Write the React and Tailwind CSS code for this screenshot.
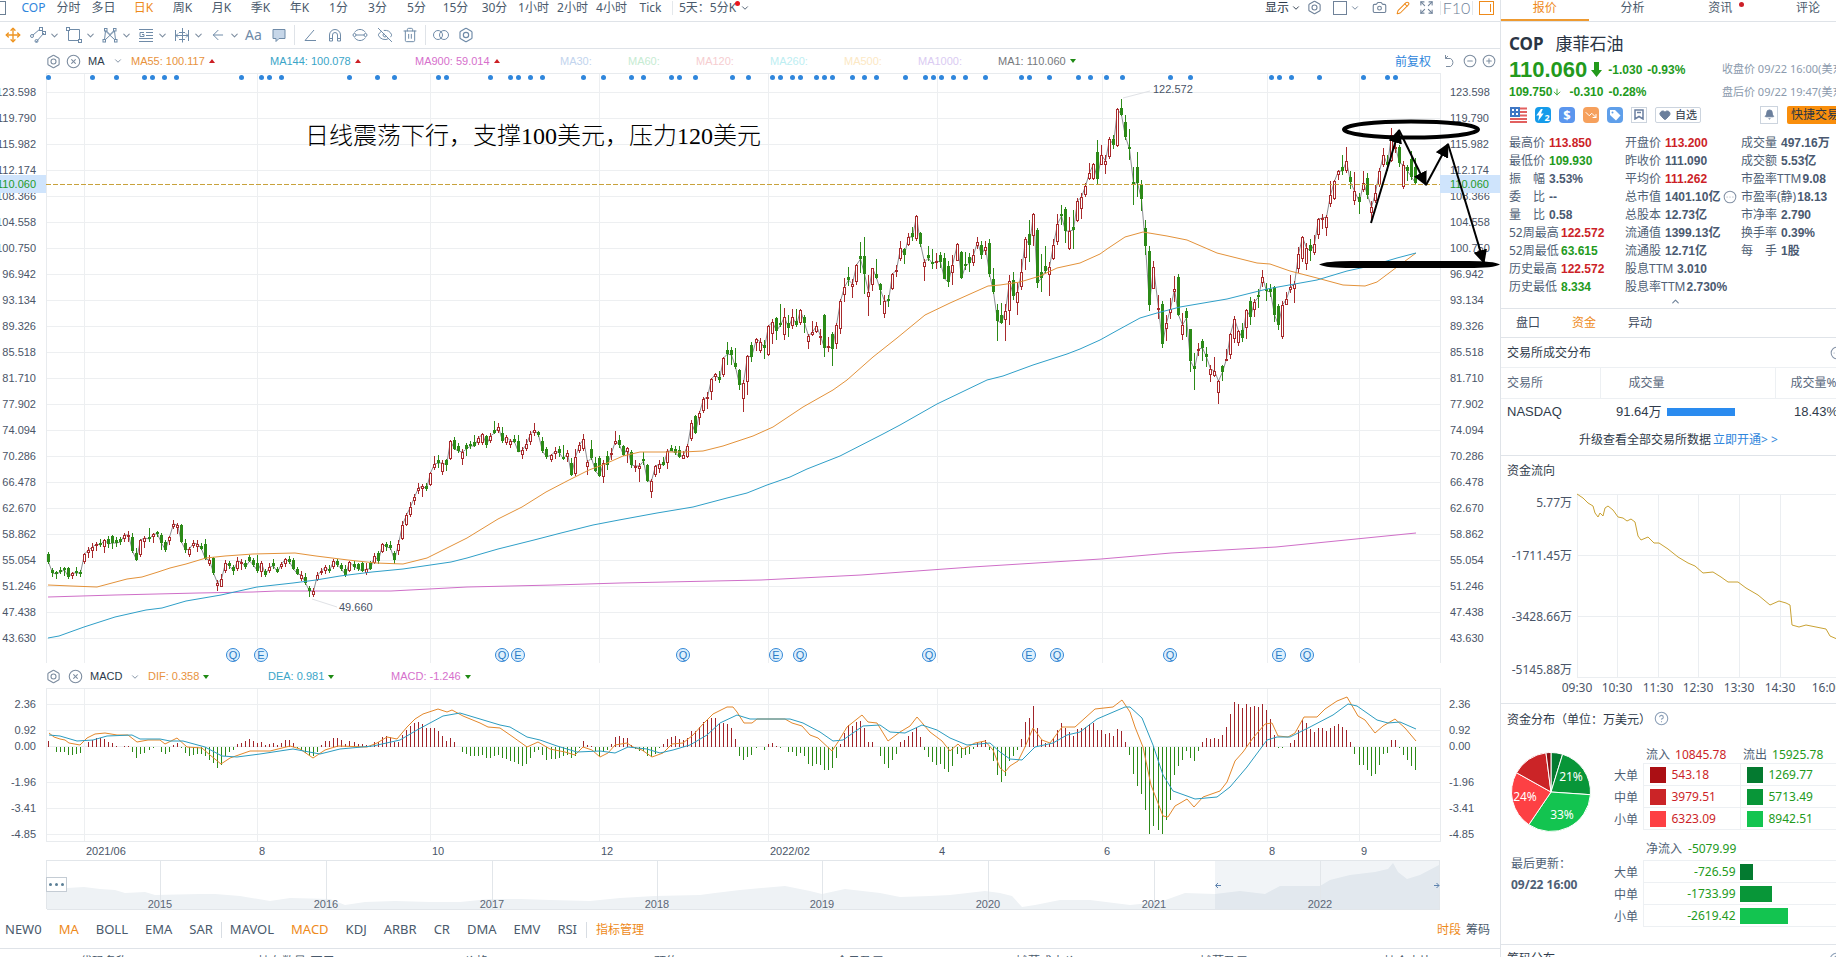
import {
  Bolt, Camera, ChevronDown, ChevronUp, CircleEllipsis, CircleHelp, CircleMinus, CirclePlus, CircleX,
  EyeOff, Heart, Expand, Move, Pencil, Trash2, Bell, TrendingDown, ArrowLeft, ArrowDown,
} from 'lucide-react'
import clsx from 'clsx'

/* ---------- chart data ---------- */

// One token per trading day: direction (r = up, g = down), then high, body top, body bottom, low.
// Levels are thirds of a unit below the leg's `top`.
const legs = [
  {
    top: 380,
    bars: `g516,522,546,551 g563,570,579,590 g574,576,583,598 g560,570,576,582 g561,564,570,588 g561,565,592,596
      r577,580,588,596 g562,574,578,588 g570,575,580,590 r520,522,546,552 r502,510,518,535 r488,500,514,535
      r486,492,498,514 g478,488,494,500 r476,480,500,518 g468,476,492,504 g464,468,490,506 g470,480,490,500
      g470,476,486,494 r460,466,476,486 r454,466,470,486 g460,470,514,520 g504,520,540,542 r476,480,526,530
      r468,474,486,504 g444,472,478,486 r458,462,472,490 g454,456,462,470 g460,466,490,510 g480,485,510,516
      r468,472,482,494 r420,432,440,446 r428,434,444,462 g432,436,486,490 g478,490,510,520 r502,506,526,530
      r480,488,498,504 r480,492,502,516 g488,498,506,510 g476,492,536,540 r524,540,552,558 g530,534,580,584
      r600,608,618,632 r582,598,620,622 r540,550,572,578 g542,548,558,566 g554,562,574,586 r530,542,568,572
      r538,546,552,570 g540,548,560,566 g526,532,542,546 g534,540,556,560 g524,550,574,578 r544,550,576,590
      g566,574,584,590 r550,560,572,580 g536,548,558,568 g562,566,576,580 r546,552,562,568 r534,538,552,562
      g528,538,546,552 g534,540,566,570 g560,566,582,586 r572,586,596,602 g580,592,610,616 g618,625,634,652
      r624,632,644,650 r576,584,600,602 r564,572,580,586 r556,562,572,582 g556,566,574,578 r536,542,560,568
      g536,542,554,560 g550,554,568,572 g554,566,584,592 r542,546,574,576 g542,552,562,570 g548,552,566,574
      g546,550,572,576 r550,568,578,586 g544,550,566,570 r520,528,548,552 g514,520,542,552 r488,492,516,520
      g486,492,502,512 g484,494,504,510 g514,520,540,552 r480,492,512,526 r424,436,476,480 r400,406,436,438
      r366,382,406,412 r342,350,362,374 r308,324,334,342 r312,318,326,350 g310,318,328,332 r276,280,314,318
      r228,252,264,270 g226,240,248,264 r240,250,276,284 g236,240,256,272 r180,184,238,240 g172,180,206,210
      g190,198,214,220 r208,216,236,256 g190,196,206,228 g182,192,198,206 g166,186,198,200 r168,174,190,196
      r158,162,190,194 g164,168,194,204 r160,168,184,190 g122,150,158,162 r130,140,154,158 g142,160,184,190
      r166,172,188,194 r176,182,194,204 g166,176,186,190 g166,182,216,216 r200,210,224,236 r178,192,206,214
      r154,162,186,196 r130,150,158,168 g154,156,166,170 g172,184,212,220 g202,208,232,238 r222,226,240,246
      r200,212,222,238 g198,206,220,232 g196,230,236,240 r210,218,230,246 g234,250,284,288 r208,230,282,288
      r186,194,214,220 r162,176,206,212 r240,246,262,286 g180,206,234,240 g230,250,272,276 g228,234,288,292`,
  },
  {
    top: 200,
    bars: `r780,790,830,850 g754,768,795,810 r744,758,764,780 r694,724,732,736 g705,720,734,744 g735,737,765,768
      r740,744,756,788 g750,757,794,803 r780,798,805,817 r790,798,806,845 g755,777,784,795 g792,796,842,845
      r838,842,876,893 r795,799,826,830 r780,793,806,818 g770,786,795,797 r748,752,790,806 g736,743,752,754
      g739,748,758,766 g738,750,770,774 r754,766,776,778 r733,737,770,773 r660,669,718,724 g646,649,698,701
      r633,640,655,675 r592,598,634,640 r576,590,598,626 r534,538,576,600 r520,523,530,544 g514,530,540,548
      r472,475,526,531 g427,451,462,494 g442,451,466,496 g443,489,500,506 g508,510,556,569 r540,550,596,635
      r465,469,547,584 g427,436,470,486 r415,418,430,454 r415,426,452,458 g421,435,444,476 r374,379,464,467
      r358,367,401,431 g352,355,394,421 g313,369,376,380 r325,352,404,419 g346,370,385,410 r328,352,379,388
      g327,363,374,382 r328,331,370,376 g346,351,370,400 r402,409,427,448 r363,397,404,408 r365,379,397,399
      r388,409,415,434 g343,345,445,472 r412,437,443,456 g397,401,448,497 r370,376,433,446 r297,304,388,403
      r233,262,284,305 g202,232,241,257 r238,252,260,293 r193,196,247,256 g125,169,177,218 g112,169,223,283
      r226,277,292,347 r203,205,256,272 g178,223,233,238 g250,253,271,316 r284,302,343,355 g286,298,304,320
      r220,223,268,271 r196,210,217,232 r122,145,178,184 g143,147,166,193 r100,112,136,139 g82,98,110,124
      r46,49,118,124 g97,100,131,142 r178,187,202,244 g139,166,173,182 g146,187,193,206 r160,184,190,208
      g157,166,185,205 g160,175,236,238 g184,198,245,260 r166,196,220,256 r128,133,182,184 g154,157,235,238
      g157,193,199,211 g160,172,190,217 r146,166,190,199 r112,125,139,148 g122,136,164,176 r124,142,152,166
      g118,130,221,230 g205,238,275,281 g313,330,362,422 g310,346,370,373 r313,334,361,422 r226,244,334,374
      g217,240,287,299 r250,277,310,344 r178,217,262,271 r112,118,175,211 g61,102,136,185 r38,41,109,139
      g85,90,250,265 g163,217,235,275 g137,199,214,220 r187,202,226,287 r118,136,178,181 r41,73,125,134
      g16,42,49,76 g22,28,94,130 r50,92,148,149 g31,82,89,146`,
  },
  {
    top: 0,
    bars: `r595,604,663,667 r580,592,626,658 r550,559,584,592 r490,520,536,541 r489,492,538,541 g421,457,536,556
      r436,466,494,496 r464,484,496,521 r412,418,472,478 g404,418,434,448 r323,326,439,442 g297,324,344,349
      g345,367,410,421 g388,442,446,480 g502,546,550,616 g456,502,550,592 g541,556,596,632 g661,685,737,766
      g738,754,914,932`,
  },
  {
    top: 240,
    bars: `r63,80,146,148 r166,205,211,238 g184,193,311,323 r226,250,268,302 r175,208,218,237 r108,148,155,186
      g102,112,224,228 r220,256,284,300 g205,214,233,290 g266,268,364,395 g340,378,387,449 r310,328,334,347
      g298,304,325,362 g322,342,350,380 r376,388,406,425 r352,394,409,411 r420,424,460,493 g374,379,397,422
      r328,356,362,364 r280,283,346,358 r228,237,298,310 r270,274,308,318 g250,271,293,305 r208,211,265,298
      g170,184,232,254 r178,187,211,230 g146,166,172,203 r91,110,128,142 g130,146,152,182 g133,148,157,172
      g138,142,226,245 g193,198,256,269 r184,196,290,296 r156,178,194,196 r106,142,150,158 r124,133,146,190`,
  },
  {
    top: 0,
    bars: `r742,763,808,820 r709,712,776,786 r730,745,793,811 g718,736,754,782 r706,733,758,766 r655,658,706,716
      r643,655,661,686 r645,652,685,709 r542,584,612,622 r541,544,596,600 r511,514,526,541 g466,502,512,526
      r442,484,514,518 g512,532,545,568 r517,574,602,616 g580,592,607,643 r514,550,571,577 g520,535,584,598
      r604,622,640,668 r556,580,602,610 r505,514,556,562 r445,466,496,502 g466,485,496,514 r385,406,482,487
      r415,442,448,458 g436,441,490,502 r484,496,560,568 g496,500,512,544 g454,478,532,540 g475,500,549,556`,
  },
]

const dayX = (i) => Math.round(48 + i * 4.02) + 0.5

const candles = legs
  .flatMap(({ top, bars }) =>
    bars.trim().split(/\s+/).map((token) => {
      const [high, open, close, low] = token.slice(1).split(',').map((v) => Math.round(top + v / 3))
      return { up: token[0] === 'r', high, bodyTop: open, bodyBottom: close, low }
    }))
  .map((c, i) => ({ ...c, x: dayX(i) }))

const closeLine = candles.map((c) => `${c.x},${c.up ? c.bodyTop : c.bodyBottom}`).join(' ')

// MACD histogram, thirds of a unit, positive = above zero
const histogram = [
  18, 0, -14, -16, -16, -25, -25, -22, -19, 0, 14, 22, 27, 27, 24, 16, 13, 4, 0, 4, 4, -16, -34, -22, -18, -10, -4, 0, -14, -22,
  -16, 6, 12, -4, -18, -26, -24, -20, -20, -28, -38, -48, -62, -54, -28, -14, -8, 10, 12, 18, 24, 18, 13, 16, 7, 10, 13, 7, 12, 22,
  20, 13, -4, -10, -18, -28, -28, -16, 6, 18, 18, 27, 26, 20, 10, 18, 16, 8, 10, 6, 4, 16, 14, 30, 32, 30, 14, 16, 36, 50,
  64, 72, 74, 68, 56, 56, 56, 48, 34, 18, 28, 16, 0, -16, -22, -28, -28, -28, -24, -32, -32, -26, -24, -34, -36, -42, -44, -52, -58, -52,
  -32, -16, -10, -24, -38, -36, -36, -32, -28, -24, -34, -26, -4, 18, 6, 4, -12, -26, -16, -8, 8, 30, 34, 28, 26, 6, -6, -12, -12, -26,
  -30, -20, -4, 8, 24, 30, 32, 24, 22, 28, 48, 48, 60, 76, 80, 86, 86, 72, 72, 70, 56, 24, -26, -40, -30, -24, -4, 0, -8, 8,
  12, 4, -4, 0, -16, -16, -26, -18, -28, -50, -56, -50, -54, -68, -68, -64, -34, 8, 42, 66, 62, 76, 78, 56, 16, 16, 0, -26, -50, -62,
  -38, -20, 14, 22, 34, 44, 56, 30, -10, -30, -46, -54, -52, -66, -74, -56, -22, -34, -24, -20, -6, 16, 14, 20, -10, -42, -84, -104, -88, -42,
  -26, -10, 24, 76, 88, 124, 58, 22, 12, 8, 26, 52, 72, 58, 44, 34, 54, 56, 60, 70, 72, 50, 52, 38, 42, 34, 54, 48, 16, -24,
  -82, -116, -140, -190, -262, -238, -248, -262, -220, -160, -84, -58, -40, -12, -34, -42, -12, 14, 28, 24, 28, 24, 36, 60, 100, 134, 128, 118, 128, 120,
  122, 120, 128, 110, 84, 36, -4, -4, 0, 12, 20, 50, 80, 72, 54, 46, 58, 56, 48, 56, 64, 68, 60, 50, 16, -20, -54, -54, -68, -88,
  -82, -54, -20, -18, 22, 22, -4, -24, -38, -56, -68,
]

const ma55 = '48,585 71,586 97,587 127,579 142,577 158,572 170,568 186,564 206,558 225,556 253,554 295,553 316,556 348,560 376,563 403,564 427,558 467,538 498,519 522,507 546,492 569,480 589,470 605,464 623,456 640,452 683,452 703,451 723,446 753,436 773,427 803,407 833,390 847,380 873,357 897,338 925,315 950,303 988,286 1000,285 1020,282 1040,276 1057,268 1080,263 1100,254 1107,249 1125,237 1143,232 1167,236 1187,240 1217,253 1257,263 1270,264 1290,271 1317,278 1343,285 1365,286 1377,282 1393,270 1416,253'
const ma144 = '48,638 59,636 84,627 115,617 146,610 162,608 186,601 221,595 257,587 293,583 316,580 340,576 372,572 403,569 451,562 467,558 498,549 534,540 561,533 593,525 619,520 657,513 693,507 727,498 747,493 767,485 790,477 807,469 840,456 883,434 900,425 937,404 987,380 1003,376 1033,365 1067,354 1080,349 1100,340 1118,330 1140,318 1157,313 1180,307 1227,299 1267,289 1317,280 1347,271 1370,266 1397,258 1416,253'
const ma900 = '48,597 115,595 198,593 253,592 277,591 391,591 467,587 554,585 620,583 761,580 861,575 972,567 1101,559 1171,553 1276,547 1416,533'

const dif = '49,733 54,737 60,739 65,740 69,743 80,745 87,738 95,734 105,733 117,735 128,735 137,742 148,740 160,740 165,744 177,738 187,747 202,748 210,755 221,764 230,758 250,751 270,751 290,746 300,749 313,758 325,750 338,746 367,747 377,743 387,737 397,739 407,727 415,719 423,714 438,709 447,712 452,710 463,716 480,723 488,727 500,728 513,737 527,747 538,742 550,749 565,752 575,755 583,747 592,750 600,757 608,753 615,745 627,743 633,747 642,750 652,757 663,753 672,744 683,743 693,735 703,724 713,714 727,707 733,707 737,712 744,723 752,723 757,719 785,719 792,723 802,726 810,735 818,738 832,751 838,742 847,727 862,715 868,722 877,723 888,741 900,732 910,726 917,717 930,732 942,741 950,751 958,744 963,749 975,743 985,741 993,750 1000,768 1005,772 1010,766 1018,761 1025,747 1033,728 1042,740 1050,743 1062,727 1075,727 1095,709 1113,707 1122,700 1130,712 1135,727 1143,747 1151,785 1163,816 1168,817 1175,806 1182,802 1187,799 1194,807 1203,797 1220,791 1227,782 1235,761 1243,752 1253,738 1265,724 1272,723 1278,736 1288,737 1295,733 1304,717 1317,717 1325,709 1337,701 1347,697 1358,716 1365,720 1375,733 1383,726 1395,719 1405,728 1416,741'
const dea = '49,735 60,736 77,741 93,740 107,736 132,735 140,739 160,739 170,741 183,741 205,747 222,756 237,757 260,754 293,749 320,754 340,749 373,746 400,740 417,730 443,716 460,713 480,719 500,725 510,727 527,737 540,740 557,746 577,752 600,751 615,753 628,747 647,749 660,753 673,750 690,745 707,735 720,723 737,715 750,719 790,719 803,723 820,732 833,741 843,740 863,726 880,725 890,732 905,733 922,725 937,730 950,738 967,745 990,743 1000,752 1010,759 1022,760 1035,747 1053,743 1067,735 1080,732 1097,719 1125,707 1130,707 1142,718 1153,745 1163,775 1173,791 1187,796 1195,799 1217,797 1230,787 1247,767 1267,740 1277,737 1290,737 1310,727 1333,715 1348,704 1357,706 1377,720 1388,723 1400,722 1416,729'

const history = '46,889 67,888 84,887 100,889 115,890 125,893 145,892 155,895 200,894 215,894 240,896 270,901 290,898 330,899 345,905 365,902 395,901 430,902 460,902 490,899 520,899 550,900 590,901 620,898 655,896 700,895 715,893 740,890 785,886 810,891 822,894 845,889 880,893 900,897 930,896 950,895 985,891 1000,893 1012,896 1022,907 1035,905 1060,900 1090,900 1130,905 1160,902 1185,893 1215,894 1240,891 1265,894 1280,886 1320,886 1330,880 1350,875 1375,872 1388,869 1393,863 1398,872 1407,879 1420,875 1439,865'

const newsMarks = [
  48, 92, 116, 144, 152, 164, 176, 241, 261, 269, 281, 349, 377, 394, 438, 446, 490, 510, 518, 530, 542, 583, 603, 631, 643,
  671, 679, 695, 732, 748, 772, 780, 792, 800, 816, 824, 832, 852, 864, 876, 905, 925, 933, 941, 953, 965, 985, 1021, 1029,
  1049, 1078, 1090, 1106, 1122, 1170, 1190, 1271, 1279, 1291, 1319, 1363, 1387, 1395,
]

const events = [
  [233, 'Q'], [261, 'E'], [502, 'Q'], [518, 'E'], [683, 'Q'], [776, 'E'], [800, 'Q'],
  [929, 'Q'], [1029, 'E'], [1057, 'Q'], [1170, 'Q'], [1279, 'E'], [1307, 'Q'],
]

const months = [
  [84, '2021/06'], [257, '8'], [430, '10'], [599, '12'], [768, '2022/02'], [937, '4'], [1102, '6'], [1267, '8'], [1359, '9'],
]
const years = [[160, 2015], [326, 2016], [492, 2017], [657, 2018], [822, 2019], [988, 2020], [1154, 2021], [1320, 2022]]

const prices = [
  '123.598', '119.790', '115.982', '112.174', '108.366', '104.558', '100.750', '96.942', '93.134', '89.326', '85.518',
  '81.710', '77.902', '74.094', '70.286', '66.478', '62.670', '58.862', '55.054', '51.246', '47.438', '43.630',
]
const macdTicks = [[704, '2.36'], [730, '0.92'], [746, '0.00'], [782, '-1.96'], [808, '-3.41'], [834, '-4.85']]

const chartFont = "font-['Liberation_Sans',sans-serif] text-[11px]"

/* ---------- left: toolbars ---------- */

const periods = ['日K', '周K', '月K', '季K', '年K', '1分', '3分', '5分', '15分', '30分', '1小时', '2小时', '4小时', 'Tick']

function PeriodBar() {
  return (
    <nav className="flex h-[22px] shrink-0 items-center border-b border-[#dfe3e8] pb-[6px] leading-[14px] whitespace-nowrap text-[#4a5a6c]">
      <span className="-ml-2 h-[14px] w-[14px] shrink-0 border border-[#6b7f94]" />
      <div className="ml-[10px] flex">
        <button className="w-[35px] text-[#2f86dc]">COP</button>
        <button className="w-[35px]">分时</button>
        <button className="w-[35px]">多日</button>
      </div>
      <div className="ml-[3px] flex">
        {periods.map((p) => (
          <button key={p} className={clsx('w-[39px]', p === '日K' && 'text-[#ee8a1a]')}>{p}</button>
        ))}
      </div>
      <span className="ml-[2px] h-[14px] w-px bg-[#e4e8ec]" />
      <button className="relative ml-[6px] flex items-center gap-1">
        5天：5分K
        <ChevronDown size={10} strokeWidth={2.25} />
        <span className="absolute top-0 right-[10px] h-[5px] w-[5px] rounded-full bg-[#e8141c]" />
      </button>

      <div className="ml-auto flex items-center text-[#6f8299]">
        <button className="flex items-center gap-[2px] text-[#2c3a4a]">显示<ChevronDown size={10} strokeWidth={2.25} /></button>
        <button aria-label="设置" className="ml-[6px]"><Bolt size={15} strokeWidth={1.75} /></button>
        <button aria-label="布局" className="ml-[11px] flex items-center gap-[3px]">
          <span className="h-[14px] w-[14px] border border-[#6f8299]" />
          <ChevronDown size={10} strokeWidth={2.25} />
        </button>
        <button aria-label="截图" className="ml-[12px]"><Camera size={15} strokeWidth={1.75} /></button>
        <button aria-label="画线" className="ml-[9px] text-[#ee8a1a]"><Pencil size={14} strokeWidth={1.75} /></button>
        <button aria-label="全屏" className="ml-[9px]"><Expand size={15} strokeWidth={1.75} /></button>
        <span className="ml-[6px] h-[14px] w-px bg-[#e4e8ec]" />
        <button className="w-[31px] font-['Lato',sans-serif] text-base leading-[14px] font-light">F10</button>
        <span className="h-[14px] w-px bg-[#e4e8ec]" />
        <button aria-label="侧栏" className="mx-[6px] flex h-[14px] w-[15px] justify-end border border-[#ee8a1a] p-[2px]">
          <span className="h-2 w-px bg-[#ee8a1a]" />
        </button>
      </div>
    </nav>
  )
}

function Glyph({ children }) {
  return (
    <svg viewBox="0 0 16 16" fill="none" stroke="currentColor" className="h-4 w-4 shrink-0">{children}</svg>
  )
}

const drawMenus = [
  {
    name: '线段',
    icon: (
      <Glyph>
        <path d="M3 8 10 2M6 15 14 6" />
        <circle cx="2" cy="9" r="1.5" /><rect x="9.5" y=".5" width="3" height="3" />
        <rect x="12.5" y="4.5" width="3" height="3" /><circle cx="6.5" cy="14" r="1.5" />
      </Glyph>
    ),
  },
  {
    name: '形状',
    icon: (
      <Glyph>
        <path d="M4 2.5H13.5V12M12 13.5H2.5V4" />
        <rect x=".5" y=".5" width="3" height="3" /><rect x="12.5" y="12.5" width="3" height="3" />
      </Glyph>
    ),
  },
  {
    name: '形态',
    icon: (
      <Glyph>
        <path d="M2.5 13 3.5 4 13 13M3 13 12.5 4 13.500 13M4.500 4 8 7.500 11.500 4" />
        <rect x="2.500" y="1.500" width="2.500" height="2.500" /><rect x="11.500" y="1.500" width="2.500" height="2.500" />
        <rect x="1" y="12.500" width="2.500" height="2.500" /><rect x="12.500" y="12.500" width="2.500" height="2.500" />
      </Glyph>
    ),
  },
  {
    name: '斐波那契',
    icon: (
      <Glyph>
        <path d="M1 2.500H15M8 5.500H15M8 8.500H15M1 11.500H15M1 14.500H15M6 5.500H2V9.500H6V7.500H4" />
      </Glyph>
    ),
  },
  {
    name: '测量',
    icon: (
      <Glyph>
        <path d="M1.500 3V14M14.500 3V14M2 8.500H14M5 5.500H11M5 12.500H11M8.500 1V15.500M4 6.500 2 8.500 4 10.500M12 6.500 14 8.500 12 10.500" />
      </Glyph>
    ),
  },
  { name: '箭头', icon: <ArrowLeft size={16} strokeWidth={1.5} /> },
]

function DrawBar() {
  return (
    <div className="flex h-[27px] shrink-0 items-center border-b border-[#dfe3e8] pl-[5px] text-[#6f8ba8]">
      <button aria-label="移动" className="mr-[9px] text-[#ee9420]"><Move size={16} strokeWidth={2} /></button>
      {drawMenus.map(({ name, icon }) => (
        <button key={name} aria-label={name} className="flex w-9 items-center gap-[3px]">
          {icon}
          <ChevronDown size={11} strokeWidth={2.25} className="text-[#7d8da0]" />
        </button>
      ))}
      <div className="flex items-center gap-[9px]">
        <button aria-label="文字" className="w-4 text-sm leading-4"><span className="-ml-px">Aa</span></button>
        <button aria-label="标注">
          <Glyph><path d="M2 2.500H14V11.500H8L5 14.500V11.500H2Z" fill="#c6d6e8" /></Glyph>
        </button>
      </div>
      <span className="mx-[7px] h-5 w-px bg-[#dfe3e8]" />
      <div className="flex items-center gap-[9px]">
        <button aria-label="角度"><Glyph><path d="M12 3 3 13.500H14" /></Glyph></button>
        <button aria-label="磁吸">
          <Glyph><path d="M2.500 14V8A5.500 5.500 0 0 1 13.500 8V14H10.500V8A2.500 2.500 0 0 0 5.500 8V14ZM2.500 11.500H5.500M10.500 11.500H13.500" /></Glyph>
        </button>
        <button aria-label="连续">
          <Glyph>
            <path d="M2.500 5.500A6.500 6.500 0 0 1 13.500 5.500M2.500 10.500A6.500 6.500 0 0 0 13.500 10.500M4 8H12" />
            <circle cx="2.500" cy="8" r="1.500" /><circle cx="13.500" cy="8" r="1.500" />
          </Glyph>
        </button>
        <button aria-label="隐藏"><EyeOff size={16} strokeWidth={1.5} /></button>
        <button aria-label="删除"><Trash2 size={16} strokeWidth={1.5} /></button>
      </div>
      <span className="mx-[7px] h-5 w-px bg-[#dfe3e8]" />
      <div className="flex items-center gap-[9px]">
        <button aria-label="对比"><Glyph><circle cx="5" cy="8" r="4.500" /><circle cx="11" cy="8" r="4.500" /></Glyph></button>
        <button aria-label="画线设置"><Bolt size={16} strokeWidth={1.75} /></button>
      </div>
    </div>
  )
}

function Caret({ up }) {
  return (
    <svg viewBox="0 0 6 4" className="h-1 w-[6px]">
      {up ? <path d="M0 4 3 0 6 4Z" fill="#cc1f24" /> : <path d="M0 0H6L3 4Z" fill="#1f8a14" />}
    </svg>
  )
}

const maLegend = [
  { text: 'MA55: 100.117', up: true, cls: 'w-[139px] text-[#e8923c]' },
  { text: 'MA144: 100.078', up: true, cls: 'w-[145px] text-[#3aa5c8]' },
  { text: 'MA900: 59.014', up: true, cls: 'w-[145px] text-[#d670cc]' },
  { text: 'MA30:', cls: 'w-[68px] text-[#c2d4ee]' },
  { text: 'MA60:', cls: 'w-[68px] text-[#c6ebd2]' },
  { text: 'MA120:', cls: 'w-[74px] text-[#f6cdd0]' },
  { text: 'MA260:', cls: 'w-[74px] text-[#bdeef2]' },
  { text: 'MA500:', cls: 'w-[74px] text-[#fce8c4]' },
  { text: 'MA1000:', cls: 'w-[80px] text-[#dacbf2]' },
  { text: 'MA1: 110.060', up: false, cls: 'text-[#75787c]' },
]

function MaLegend() {
  return (
    <div className={clsx('flex h-6 shrink-0 items-center pl-[46px] whitespace-nowrap', chartFont)}>
      <button aria-label="均线设置" className="text-[#7d8da0]"><Bolt size={15} strokeWidth={1.75} /></button>
      <button aria-label="关闭均线" className="ml-[5px] text-[#7d8da0]"><CircleX size={15} strokeWidth={1.75} /></button>
      <button className="ml-[7px] flex w-[43px] items-center gap-2 text-[#2c3a4a]">MA<ChevronDown size={10} strokeWidth={2.25} className="text-[#7d8da0]" /></button>
      {maLegend.map(({ text, up, cls }) => (
        <span key={text} className={clsx('flex shrink-0 items-center gap-1', cls)}>
          {text}
          {up !== undefined && <Caret up={up} />}
        </span>
      ))}
      <div className="ml-auto flex items-center pr-1 text-[#7d8da0]">
        <button className="mr-3 font-['Noto_Sans_CJK_SC',sans-serif] text-xs text-[#2f86dc]">前复权</button>
        <button aria-label="还原">
          <svg viewBox="0 0 14 14" fill="none" stroke="currentColor" className="h-[14px] w-[14px]"><path d="M2.500 1V4.500H7.500A4.500 4.500 0 0 1 7.500 12.500H3M2.500 4.500 5 2" /></svg>
        </button>
        <button aria-label="缩小" className="ml-[6px]"><CircleMinus size={14} strokeWidth={1.75} /></button>
        <button aria-label="放大" className="ml-[5px]"><CirclePlus size={14} strokeWidth={1.75} /></button>
      </div>
    </div>
  )
}

function MacdLegend() {
  return (
    <div className={clsx('flex h-[25px] shrink-0 items-center pt-[2px] pl-[46px] whitespace-nowrap', chartFont)}>
      <button aria-label="MACD设置" className="text-[#7d8da0]"><Bolt size={15} strokeWidth={1.75} /></button>
      <button aria-label="关闭MACD" className="ml-[7px] text-[#7d8da0]"><CircleX size={15} strokeWidth={1.75} /></button>
      <button className="ml-[7px] flex w-[58px] items-center gap-2 text-[#2c3a4a]">MACD<ChevronDown size={10} strokeWidth={2.25} className="text-[#7d8da0]" /></button>
      <span className="flex w-[120px] items-center gap-1 text-[#e8923c]">DIF: 0.358<Caret /></span>
      <span className="flex w-[123px] items-center gap-1 text-[#3aa5c8]">DEA: 0.981<Caret /></span>
      <span className="flex items-center gap-1 text-[#d670cc]">MACD: -1.246<Caret /></span>
    </div>
  )
}

/* ---------- left: charts ---------- */

function PriceChart() {
  return (
    <svg viewBox="0 73 1500 590" className={clsx('block h-auto w-full shrink-0', chartFont)}>
      <defs>
        <marker id="head" viewBox="0 0 14 14" refX="13" refY="7" markerWidth="14" markerHeight="14" markerUnits="userSpaceOnUse" orient="auto">
          <path d="M0 0 14 7 0 14Z" />
        </marker>
      </defs>

      <g stroke="#edeff1" shapeRendering="crispEdges">
        {prices.map((p, i) => <path key={p} d={`M46 ${92.5 + i * 26}H1440`} />)}
        {months.map(([x]) => <path key={x} d={`M${x}.5 73V663`} />)}
        <path d="M46.5 73.500H1440.500V663.500H46.500Z" fill="none" stroke="#e8ebee" />
      </g>

      <g fill="#4a5568">
        {prices.map((p, i) => (
          <g key={p}>
            <text x="36" y={96 + i * 26} textAnchor="end">{p}</text>
            <text x="1450" y={96 + i * 26}>{p}</text>
          </g>
        ))}
      </g>

      {newsMarks.map((x) => <circle key={x} cx={x + 0.5} cy="77.5" r="2.500" fill="#2f86dc" />)}

      <g fill="#cfe4fc">
        <rect x="0" y="175" width="46" height="18" />
        <rect x="1440" y="175" width="60" height="18" />
      </g>
      <g fill="#1f9a2a">
        <text x="36" y="188" textAnchor="end">110.060</text>
        <text x="1450" y="188">110.060</text>
      </g>

      <g fill="none">
        <polyline points={closeLine} stroke="#8b8d92" />
        <polyline points={ma900} stroke="#cf6fc8" />
      </g>

      <g shapeRendering="crispEdges">
        {candles.map(({ up, x, high, low, bodyTop, bodyBottom }) => (
          <g key={x} stroke={up ? '#a82a2c' : '#2c8a18'}>
            <path d={`M${x} ${high}V${low}`} />
            {up
              ? <rect x={x - 1} y={bodyTop + 0.5} width="2" height={Math.max(bodyBottom - bodyTop - 1, 1)} fill="#fff" />
              : <rect x={x - 1} y={bodyTop + 0.5} width="2" height={Math.max(bodyBottom - bodyTop - 1, 1)} fill="#2c8a18" />}
          </g>
        ))}
      </g>

      <g fill="none">
        <polyline points={ma55} stroke="#e3923a" />
        <polyline points={ma144} stroke="#2f9fc8" />
        <path d="M46 184.500H1440" stroke="#c8a23c" strokeDasharray="5 2" />
        <path d="M1123 98 1150 91M312 599 337 607" stroke="#e0e2e6" />
      </g>

      <g fill="#4a5568">
        <text x="1153" y="93">122.572</text>
        <text x="339" y="611">49.660</text>
      </g>

      {events.map(([x, letter]) => (
        <g key={x}>
          <circle cx={x} cy="655" r="6.500" fill="#dff0fc" stroke="#3388d8" />
          <text x={x} y="659" textAnchor="middle" fill="#2a7cc8">{letter}</text>
        </g>
      ))}

      {/* hand-drawn notes over the chart */}
      <text x="305" y="144" className="font-['Liberation_Serif','Noto_Sans_CJK_SC',serif] text-2xl font-light">
        日线震荡下行，支撑100美元，压力120美元
      </text>
      <ellipse cx="1411" cy="129.500" rx="67" ry="8" fill="none" stroke="#000" strokeWidth="4" />
      <path d="M1319 264.500Q1326 261 1352 261H1468Q1494 261 1500 264.500Q1494 268 1468 268H1352Q1326 268 1319 264.500Z" />
      <g stroke="#000" strokeWidth="2">
        <path d="M1371 223 1399 130" markerEnd="url(#head)" />
        <path d="M1399 130 1426 185" markerEnd="url(#head)" />
        <path d="M1426 185 1448 144" markerEnd="url(#head)" />
        <path d="M1448 144 1484 263" markerEnd="url(#head)" />
      </g>
    </svg>
  )
}

function MacdChart() {
  return (
    <svg viewBox="0 688 1500 172" className={clsx('block h-auto w-full shrink-0', chartFont)}>
      <g stroke="#edeff1" shapeRendering="crispEdges">
        {macdTicks.map(([y]) => <path key={y} d={`M46 ${y}.500H1440`} />)}
        {months.map(([x]) => <path key={x} d={`M${x}.5 688V841`} />)}
        <path d="M46.500 688.500H1440.500V841.500H46.500Z" fill="none" stroke="#e8ebee" />
      </g>
      <g fill="#4a5568">
        {macdTicks.map(([y, label]) => (
          <g key={y}>
            <text x="36" y={y + 4} textAnchor="end">{label}</text>
            <text x="1449" y={y + 4}>{label}</text>
          </g>
        ))}
        {months.map(([x, label]) => <text key={x} x={x + 2} y="855">{label}</text>)}
      </g>
      <g shapeRendering="crispEdges">
        {histogram.map((v, i) => (
          <path key={dayX(i)} d={`M${dayX(i)} 747V${747 - Math.round(v / 3)}`} stroke={v > 0 ? '#a0242a' : '#2c8a18'} />
        ))}
      </g>
      <polyline points={dif} fill="none" stroke="#e3882c" />
      <polyline points={dea} fill="none" stroke="#2c9cc0" />
    </svg>
  )
}

function Navigator() {
  return (
    <svg viewBox="0 860 1500 50" className={clsx('block h-auto w-full shrink-0', chartFont)}>
      <polygon points={`46,909 ${history} 1439,909`} fill="#eef2f5" />
      <rect x="1215" y="860" width="225" height="49" fill="#8fa5bd" fillOpacity=".12" />
      <g stroke="#e2e6ea" shapeRendering="crispEdges">
        {years.map(([x]) => <path key={x} d={`M${x}.5 860V909`} />)}
        <path d="M46.500 860.500H1440M46.500 909.500H1440M46.500 860V909M1439.500 860V909" />
      </g>
      <g fill="#5b6676" textAnchor="middle">
        {years.map(([x, label]) => <text key={x} x={x} y="908">{label}</text>)}
      </g>
      <rect x="46.500" y="877.500" width="20" height="14" fill="#fff" stroke="#c4ccd4" />
      <g fill="#5b7f96">
        <circle cx="50.500" cy="884.500" r="1.500" /><circle cx="56.500" cy="884.500" r="1.500" /><circle cx="62.500" cy="884.500" r="1.500" />
      </g>
      <path d="M1221 885.500H1216M1218 883 1215.500 885.500 1218 888M1434 885.500H1439M1436.500 883 1439 885.500 1436.500 888" fill="none" stroke="#5d82ae" />
    </svg>
  )
}

function IndicatorBar() {
  return (
    <div className="flex h-[39px] shrink-0 items-center border-b border-[#dfe3e8] pt-px pr-[10px] pl-[5px] whitespace-nowrap text-[#4a5a6c]">
      <div className="flex gap-[17px] text-[13px]">
        {['NEW0', 'MA', 'BOLL', 'EMA', 'SAR'].map((n) => (
          <button key={n} className={clsx(n === 'MA' && 'text-[#ee8a1a]')}>{n}</button>
        ))}
      </div>
      <span className="mx-2 h-4 w-px bg-[#d8dde3]" />
      <div className="flex gap-[17px] text-[13px]">
        {['MAVOL', 'MACD', 'KDJ', 'ARBR', 'CR', 'DMA', 'EMV', 'RSI'].map((n) => (
          <button key={n} className={clsx(n === 'MACD' && 'text-[#ee8a1a]')}>{n}</button>
        ))}
      </div>
      <span className="mx-[9px] h-4 w-px bg-[#d8dde3]" />
      <button className="text-[#ee8a1a]">指标管理</button>
      <div className="ml-auto flex gap-[5px]">
        <button className="text-[#ee8a1a]">时段</button>
        <button>筹码</button>
      </div>
    </div>
  )
}

function OrdersHead() {
  return (
    <div className="flex min-h-0 flex-1 items-start overflow-hidden pt-[5px] pl-20 leading-4 whitespace-nowrap text-[#4a5a6c]">
      <span className="w-[178px] shrink-0">代码名称</span>
      <span className="w-[206px] shrink-0">持有数量/可用</span>
      <span className="w-[190px] shrink-0">价格</span>
      <span className="w-[182px] shrink-0">预约</span>
      <span className="w-[180px] shrink-0">今日盈亏</span>
      <span className="w-[184px] shrink-0">摊薄成本价</span>
      <span className="w-[184px] shrink-0">摊薄盈亏</span>
      <span>持仓占比</span>
    </div>
  )
}

/* ---------- right: quote panel ---------- */

const red = 'text-[#cc1f28]'
const green = 'text-[#239a1c]'

const stats = [
  [
    ['最高价', '113.850', red], ['最低价', '109.930', green], ['振　幅', '3.53%'], ['委　比', '--'], ['量　比', '0.58'],
    ['52周最高', '122.572', red], ['52周最低', '63.615', green], ['历史最高', '122.572', red], ['历史最低', '8.334', green],
  ],
  [
    ['开盘价', '113.200', red], ['昨收价', '111.090'], ['平均价', '111.262', red], ['总市值', '1401.10亿', null, true],
    ['总股本', '12.73亿'], ['流通值', '1399.13亿'], ['流通股', '12.71亿'], ['股息TTM', '3.010'], ['股息率TTM', '2.730%'],
  ],
  [
    ['成交量', '497.16万'], ['成交额', '5.53亿'], ['市盈率TTM', '9.08'], ['市盈率(静)', '18.13'], ['市净率', '2.790'],
    ['换手率', '0.39%'], ['每　手', '1股'],
  ],
]

function QuoteHead() {
  return (
    <section className="border-b border-[#e0e4e9] pt-2">
      <h1 className="flex h-7 items-center gap-3 pl-2 text-[17px] text-[#2a3544]">
        <b>COP</b>康菲石油
      </h1>
      <div className="flex h-[23px] items-center pl-2 font-['Liberation_Sans',sans-serif] font-bold text-[#239a1c]">
        <span className="text-[22px]">110.060</span>
        <svg viewBox="0 0 11 15" className="ml-1 h-[15px] w-[11px]"><path d="M3 0H8V8H11L5.500 15 0 8H3Z" fill="#239a1c" /></svg>
        <span className="ml-[6px]">-1.030</span>
        <span className="ml-[5px]">-0.93%</span>
        <span className="ml-auto w-[130px] font-['Noto_Sans','Noto_Sans_CJK_SC',sans-serif] text-[11px] font-normal whitespace-nowrap text-[#8b9aad]">收盘价 09/22 16:00(美东)</span>
      </div>
      <div className="flex h-[22px] items-center pl-2 font-['Liberation_Sans',sans-serif] font-bold text-[#239a1c]">
        <span>109.750</span>
        <ArrowDown size={10} />
        <span className="ml-[7px]">-0.310</span>
        <span className="ml-[5px]">-0.28%</span>
        <span className="ml-auto w-[130px] font-['Noto_Sans','Noto_Sans_CJK_SC',sans-serif] text-[11px] font-normal whitespace-nowrap text-[#8b9aad]">盘后价 09/22 19:47(美东)</span>
      </div>
      <div className="flex h-[23px] items-center pl-[9px]">
        <svg viewBox="0 0 17 16" className="h-4 w-[17px]">
          <path d="M10 1.500H17M10 5H17M10 8.500H17M0 12H17M0 15H17" stroke="#e2605f" strokeWidth="2" />
          <rect width="10" height="10" fill="#3f77c4" />
          <path d="M2 3H4M6 3H8M2 7H4M6 7H8" stroke="#fff" strokeWidth="2" />
        </svg>
        <span className="ml-2 flex h-4 w-4 items-end justify-center rounded-sm bg-[#159bea] text-[9px] leading-[11px] font-bold text-white">
          <svg viewBox="0 0 8 13" className="mb-[2px] h-[12px] w-2"><path d="M5 0 0 7H3L2 13 8 5H5L7 0Z" fill="#fff" /></svg>2
        </span>
        <span className="ml-2 h-4 w-4 rounded-sm bg-[#5b96ee] text-center text-[13px] leading-4 font-bold text-white">$</span>
        <span className="ml-2 flex h-4 w-4 items-center justify-center rounded-sm bg-[#f6a05c] text-white"><TrendingDown size={12} /></span>
        <span className="ml-2 flex h-4 w-4 items-center justify-center rounded-sm bg-[#5f9fea]">
          <svg viewBox="0 0 12 12" className="h-3 w-3"><path d="M1 1H6L11.500 6.500 7 11.500 1 6Z" fill="#fff" /><circle cx="3.500" cy="3.500" r="1" fill="#5f9fea" /></svg>
        </span>
        <button aria-label="笔记" className="ml-2 flex h-4 w-4 items-center justify-center border border-[#ccd4de]">
          <svg viewBox="0 0 10 11" className="h-[11px] w-[10px]"><path d="M1 1H9V10L5 7.500 1 10ZM3 3.500H7" fill="none" stroke="#6b7fa0" strokeWidth="1.500" /></svg>
        </button>
        <button className="ml-2 flex h-4 w-[46px] items-center justify-center gap-1 rounded-[2px] border border-[#ccd4de] text-[11px] leading-3 text-[#2a3544]">
          <Heart size={12} fill="#6b7f9c" stroke="#6b7f9c" />自选
        </button>
        <button aria-label="提醒" className="ml-auto flex h-[18px] w-[18px] items-center justify-center border border-[#ccd4de]">
          <Bell size={11} fill="#6b7f9c" stroke="#6b7f9c" />
        </button>
        <button className="ml-[9px] h-[18px] w-[65px] rounded-[2px] bg-[#f98e0c] pl-1 text-left leading-4 whitespace-nowrap text-[#2a3544]">快捷交易</button>
      </div>

      <div className="mt-[8px] grid grid-cols-[116px_116px_1fr] pl-2">
        {stats.map((col) => (
          <dl key={col[0][0]}>
            {col.map(([label, value, tone, more]) => (
              <div key={label} className="flex h-[18px] items-center whitespace-nowrap">
                <dt className={clsx('pr-px text-[#4f5f76]', label.length > 3 ? 'min-w-[52px]' : 'min-w-[40px]')}>{label}</dt>
                <dd className={clsx("font-['Liberation_Sans','Noto_Sans_CJK_SC',sans-serif] font-bold", tone || 'text-[#4a5970]')}>{value}</dd>
                {more && <button aria-label="更多市值" className="ml-[3px] text-[#8492a6]"><CircleEllipsis size={14} strokeWidth={1.75} /></button>}
              </div>
            ))}
          </dl>
        ))}
      </div>
      <button aria-label="收起" className="flex h-[12px] w-full items-start pl-[169px] text-[#6f8299]"><ChevronUp size={11} strokeWidth={2.5} /></button>
    </section>
  )
}

function Exchanges() {
  return (
    <section className="border-b border-[#e0e4e9] text-[#2f3b4b]">
      <div className="flex h-[30px] items-center justify-between border-b border-[#edf0f3] pt-px pl-[6px]">
        <h2>交易所成交分布</h2>
        <button aria-label="更多" className="mr-[8px] text-[#8492a6]"><CircleEllipsis size={14} strokeWidth={1.75} /></button>
      </div>
      <table className="w-full table-fixed">
        <thead>
          <tr className="h-[30px] border-b border-[#edf0f3] text-left text-[#5a697d]">
            <th className="w-[99px] border-r border-[#edf0f3] pl-[6px] font-normal">交易所</th>
            <th className="w-[175px] border-r border-[#edf0f3] pl-[28px] font-normal">成交量</th>
            <th className="pl-[15px] font-normal whitespace-nowrap">成交量%</th>
          </tr>
        </thead>
        <tbody className="font-['Liberation_Sans','Noto_Sans_CJK_SC',sans-serif] text-[13px]">
          <tr className="h-[27px]">
            <td className="pl-[6px]">NASDAQ</td>
            <td className="pl-4">
              <span className="flex items-center gap-[5px]">91.64万<span className="h-2 w-[68px] bg-[#2a8bef]" /></span>
            </td>
            <td className="pl-[19px]">18.43%</td>
          </tr>
        </tbody>
      </table>
      <p className="flex h-[30px] items-center gap-[2px] pl-[78px]">
        升级查看全部交易所数据<a href="#open" className="text-[#2f86dc]">立即开通&gt; &gt;</a>
      </p>
    </section>
  )
}

const flow = '76,494 82,498 87,503 92,506 94,513 97,517 99,513 102,516 104,508 107,506 112,510 117,517 122,518 126,521 130,519 134,522 137,536 140,540 147,537 153,543 158,543 167,549 177,557 187,563 194,566 202,573 212,572 220,577 227,582 237,582 245,588 257,595 269,605 278,601 285,603 289,605 291,625 298,627 305,625 325,629 329,636 336,639 344,639'

function FundFlow() {
  return (
    <section className="border-b border-[#e0e4e9]">
      <h2 className="flex h-[30px] items-center pl-[6px] text-[#2f3b4b]">资金流向</h2>
      <svg viewBox="0 486 351 217" className="block h-auto w-full">
        <g stroke="#ebeef1" shapeRendering="crispEdges">
          {[494, 555, 616, 677].map((y) => <path key={y} d={`M76 ${y}.500H351`} />)}
          {[76, 116, 157, 197, 238, 279].map((x) => <path key={x} d={`M${x}.500 494V677`} />)}
        </g>
        <polyline points={flow} fill="none" stroke="#c9a233" />
        <g fill="#4a5568" textAnchor="end">
          <text x="71" y="507">5.77万</text>
          <text x="71" y="560">-1711.45万</text>
          <text x="71" y="621">-3428.66万</text>
          <text x="71" y="674">-5145.88万</text>
        </g>
        <g fill="#4a5568" textAnchor="middle">
          <text x="76" y="692">09:30</text>
          <text x="116" y="692">10:30</text>
          <text x="157" y="692">11:30</text>
          <text x="197" y="692">12:30</text>
          <text x="238" y="692">13:30</text>
          <text x="279" y="692">14:30</text>
          <text x="326" y="692">16:00</text>
        </g>
      </svg>
    </section>
  )
}

const slices = [
  [1269.77, '#047a30'], [5713.49, '#089638'], [8942.51, '#13c450'],
  [6323.09, '#fd4044'], [3979.51, '#cb2427'], [543.18, '#8e1014'],
]

function Pie() {
  const total = slices.reduce((sum, [v]) => sum + v, 0)
  const at = (v) => {
    const a = (v / total) * Math.PI * 2
    return `${40 + 39.5 * Math.sin(a)} ${40 - 39.5 * Math.cos(a)}`
  }
  return (
    <svg viewBox="0 0 80 80" className="h-20 w-20">
      {slices.map(([v, color], i) => {
        const from = slices.slice(0, i).reduce((sum, [n]) => sum + n, 0)
        return <path key={color} d={`M40 40 ${at(from)}A39.5 39.5 0 0 1 ${at(from + v)}Z`} fill={color} stroke="#fff" />
      })}
      <g fill="#fff" textAnchor="middle">
        <text x="60" y="29">21%</text>
        <text x="14" y="49">24%</text>
        <text x="51" y="67">33%</text>
      </g>
    </svg>
  )
}

const orders = [
  { size: '大单', inflow: '543.18', inBox: 'bg-[#ab0f14]', outflow: '1269.77', outBox: 'bg-[#047a30]', net: '-726.59', bar: 13 },
  { size: '中单', inflow: '3979.51', inBox: 'bg-[#cb2427]', outflow: '5713.49', outBox: 'bg-[#089638]', net: '-1733.99', bar: 32 },
  { size: '小单', inflow: '6323.09', inBox: 'bg-[#fd4044]', outflow: '8942.51', outBox: 'bg-[#13c450]', net: '-2619.42', bar: 48 },
]

function FundSplit() {
  return (
    <section className="border-b border-[#e0e4e9] pb-[17px]">
      <h2 className="flex h-8 items-center pl-[6px] text-[#2f3b4b]">
        资金分布（单位：万美元）
        <button aria-label="说明" className="ml-[3px] pb-1 text-[#8da0b8]"><CircleHelp size={15} strokeWidth={1.75} /></button>
      </h2>
      <div className="flex pt-[11px]">
        <div className="w-[113px] pt-[5px] pl-[10px] text-[#4f5f76]">
          <Pie />
          <p className="mt-[21px] leading-[21px]">最后更新：<br /><b>09/22 16:00</b></p>
        </div>
        <div className="flex-1 text-[#4f5f76]">
          <table className="w-full table-fixed">
            <thead>
              <tr className="h-4 text-left">
                <td className="w-[29px]" />
                <th className="w-[97px] pl-[3px] leading-4 font-normal whitespace-nowrap">流入<span className={clsx('ml-[5px]', red)}>10845.78</span></th>
                <th className="pl-[3px] leading-4 font-normal whitespace-nowrap">流出<span className={clsx('ml-[5px]', green)}>15925.78</span></th>
              </tr>
            </thead>
            <tbody>
              {orders.map((o) => (
                <tr key={o.size} className="h-[22px]">
                  <th className="pt-[3px] text-left leading-4 font-normal">{o.size}</th>
                  <td className="border border-[#edf0f3] pl-[6px]">
                    <span className={clsx('flex h-4 items-center gap-[6px]', red)}><i className={clsx('h-4 w-4', o.inBox)} />{o.inflow}</span>
                  </td>
                  <td className="border border-[#edf0f3] pl-[6px]">
                    <span className={clsx('flex h-4 items-center gap-[6px]', green)}><i className={clsx('h-4 w-4', o.outBox)} />{o.outflow}</span>
                  </td>
                </tr>
              ))}
            </tbody>
          </table>
          <h3 className="mt-[7px] flex h-[23px] items-center gap-[6px] pl-8">净流入<span className={green}>-5079.99</span></h3>
          <table className="w-full table-fixed">
            <tbody>
              {orders.map((o) => (
                <tr key={o.size} className="h-[22px]">
                  <th className="w-[29px] pt-[3px] text-left leading-4 font-normal">{o.size}</th>
                  <td className="border border-[#edf0f3]">
                    <span className="flex h-4 items-center gap-1">
                      <span className={clsx('w-[92px] text-right', green)}>{o.net}</span>
                      <i className={clsx('h-4', o.outBox)} style={{ width: o.bar }} />
                    </span>
                  </td>
                </tr>
              ))}
            </tbody>
          </table>
        </div>
      </div>
    </section>
  )
}

function QuotePanel() {
  return (
    <aside className="w-[336px] shrink-0 overflow-hidden border-l border-[#dfe3e8]">
      <div className="w-[351px]">
        <nav className="grid h-[22px] grid-cols-4 border-b border-[#dfe3e8] text-[#4a5a6c]">
          <button className="border-b-2 border-[#ee9a30] pb-[4px] leading-[15px] text-[#ee8a1a]">报价</button>
          <button className="pb-[6px] leading-[15px]">分析</button>
          <button className="relative pb-[6px] leading-[15px]">
            资讯
            <span className="absolute top-[2px] right-[20px] h-[5px] w-[5px] rounded-full bg-[#cc1f28]" />
          </button>
          <button className="pb-[6px] leading-[15px]">评论</button>
        </nav>
        <QuoteHead />
        <div className="flex h-[29px] items-center gap-8 border-b border-[#e0e4e9] pl-[15px] text-[#3d4a5c]">
          <button>盘口</button>
          <button className="text-[#ee8a1a]">资金</button>
          <button>异动</button>
        </div>
        <Exchanges />
        <FundFlow />
        <FundSplit />
        <h2 className="flex h-7 items-center justify-between pr-2 pl-[6px] text-[#2f3b4b]">
          筹码分布
          <CircleHelp size={15} strokeWidth={1.75} className="text-[#8da0b8]" />
        </h2>
      </div>
    </aside>
  )
}

export default function App() {
  return (
    <div className="flex h-screen overflow-hidden bg-white font-['Noto_Sans','Noto_Sans_CJK_SC',sans-serif] text-xs">
      <main className="flex min-w-0 flex-1 flex-col">
        <PeriodBar />
        <DrawBar />
        <MaLegend />
        <PriceChart />
        <MacdLegend />
        <MacdChart />
        <Navigator />
        <IndicatorBar />
        <OrdersHead />
      </main>
      <QuotePanel />
    </div>
  )
}
